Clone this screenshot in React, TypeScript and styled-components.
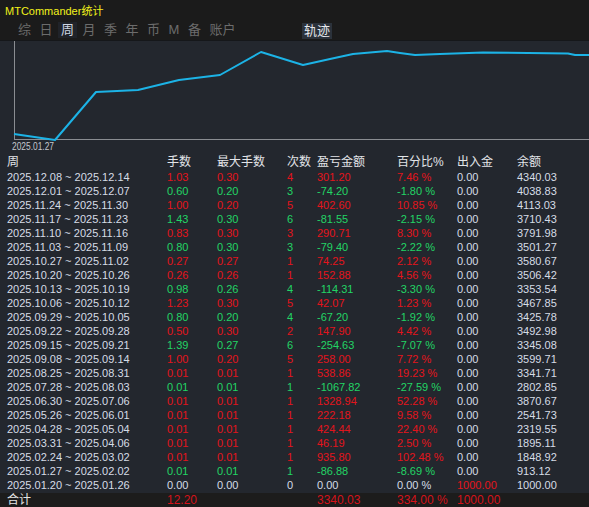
import React from "react"
import styled, { createGlobalStyle } from "styled-components"

type Tone = "up" | "down" | "flat"

const GlobalStyle = createGlobalStyle`
    html, body {
        margin: 0;
        padding: 0;
        background: #1b1b1b;
    }
    body {
        font-family: "Liberation Sans", "Noto Sans CJK SC", sans-serif;
        font-size: 11px;
    }
`

const rows: [string, string, string, string, string, string, string, string, Tone][] = [
    ["2025.12.08 ~ 2025.12.14", "1.03", "0.30", "4", "301.20", "7.46 %", "0.00", "4340.03", "up"],
    ["2025.12.01 ~ 2025.12.07", "0.60", "0.20", "3", "-74.20", "-1.80 %", "0.00", "4038.83", "down"],
    ["2025.11.24 ~ 2025.11.30", "1.00", "0.20", "5", "402.60", "10.85 %", "0.00", "4113.03", "up"],
    ["2025.11.17 ~ 2025.11.23", "1.43", "0.30", "6", "-81.55", "-2.15 %", "0.00", "3710.43", "down"],
    ["2025.11.10 ~ 2025.11.16", "0.83", "0.30", "3", "290.71", "8.30 %", "0.00", "3791.98", "up"],
    ["2025.11.03 ~ 2025.11.09", "0.80", "0.30", "3", "-79.40", "-2.22 %", "0.00", "3501.27", "down"],
    ["2025.10.27 ~ 2025.11.02", "0.27", "0.27", "1", "74.25", "2.12 %", "0.00", "3580.67", "up"],
    ["2025.10.20 ~ 2025.10.26", "0.26", "0.26", "1", "152.88", "4.56 %", "0.00", "3506.42", "up"],
    ["2025.10.13 ~ 2025.10.19", "0.98", "0.26", "4", "-114.31", "-3.30 %", "0.00", "3353.54", "down"],
    ["2025.10.06 ~ 2025.10.12", "1.23", "0.30", "5", "42.07", "1.23 %", "0.00", "3467.85", "up"],
    ["2025.09.29 ~ 2025.10.05", "0.80", "0.20", "4", "-67.20", "-1.92 %", "0.00", "3425.78", "down"],
    ["2025.09.22 ~ 2025.09.28", "0.50", "0.30", "2", "147.90", "4.42 %", "0.00", "3492.98", "up"],
    ["2025.09.15 ~ 2025.09.21", "1.39", "0.27", "6", "-254.63", "-7.07 %", "0.00", "3345.08", "down"],
    ["2025.09.08 ~ 2025.09.14", "1.00", "0.20", "5", "258.00", "7.72 %", "0.00", "3599.71", "up"],
    ["2025.08.25 ~ 2025.08.31", "0.01", "0.01", "1", "538.86", "19.23 %", "0.00", "3341.71", "up"],
    ["2025.07.28 ~ 2025.08.03", "0.01", "0.01", "1", "-1067.82", "-27.59 %", "0.00", "2802.85", "down"],
    ["2025.06.30 ~ 2025.07.06", "0.01", "0.01", "1", "1328.94", "52.28 %", "0.00", "3870.67", "up"],
    ["2025.05.26 ~ 2025.06.01", "0.01", "0.01", "1", "222.18", "9.58 %", "0.00", "2541.73", "up"],
    ["2025.04.28 ~ 2025.05.04", "0.01", "0.01", "1", "424.44", "22.40 %", "0.00", "2319.55", "up"],
    ["2025.03.31 ~ 2025.04.06", "0.01", "0.01", "1", "46.19", "2.50 %", "0.00", "1895.11", "up"],
    ["2025.02.24 ~ 2025.03.02", "0.01", "0.01", "1", "935.80", "102.48 %", "0.00", "1848.92", "up"],
    ["2025.01.27 ~ 2025.02.02", "0.01", "0.01", "1", "-86.88", "-8.69 %", "0.00", "913.12", "down"],
    ["2025.01.20 ~ 2025.01.26", "0.00", "0.00", "0", "0.00", "0.00 %", "1000.00", "1000.00", "flat"],
]

const tabs = ["综", "日", "周", "月", "季", "年", "币", "M", "备", "账户"]

const curve: [number, number][] = [
    [14, 134], [55, 140], [96, 92], [138, 90], [179, 80], [220, 75], [261, 52],
    [303, 65], [330, 59], [353, 54], [387, 51], [400, 53], [415, 55], [440, 54],
    [483, 52.5], [568, 53.5], [575, 55], [589, 55],
]

const toneColor = (t: Tone) => (t === "up" ? "#e3141c" : t === "down" ? "#22d465" : "#d6dce6")

const App = () => {
    return (
        <Window>
            <GlobalStyle />
            <TitleBar>MTCommander统计</TitleBar>
            <TabBar>
                <TabGroup>
                    {tabs.map((t) => (
                        <Tab key={t} $active={t === "周"}>
                            {t}
                        </Tab>
                    ))}
                </TabGroup>
                <TrackTab>轨迹</TrackTab>
            </TabBar>
            <Chart>
                <svg width="589" height="116" viewBox="0 40 589 116">
                    <line x1="14.5" y1="40" x2="14.5" y2="139.5" stroke="#8a8d92" strokeWidth="1" />
                    <line x1="14" y1="139.5" x2="589" y2="139.5" stroke="#8a8d92" strokeWidth="1" />
                    <polyline
                        points={curve.map((p) => p.join(",")).join(" ")}
                        fill="none"
                        stroke="#1cb3e6"
                        strokeWidth="2"
                        strokeLinejoin="round"
                    />
                    <text x="12" y="150" fill="#c4c8ce" fontSize="10" fontFamily="Liberation Sans, sans-serif" textLength="42" lengthAdjust="spacingAndGlyphs">
                        2025.01.27
                    </text>
                </svg>
            </Chart>
            <Table>
                <HeadRow>
                    <span>周</span>
                    <span>手数</span>
                    <span>最大手数</span>
                    <span>次数</span>
                    <span>盈亏金额</span>
                    <span>百分比%</span>
                    <span>出入金</span>
                    <span>余额</span>
                </HeadRow>
                {rows.map((r) => (
                    <Row key={r[0]}>
                        <Cell>{r[0]}</Cell>
                        <Cell $color={toneColor(r[8])}>{r[1]}</Cell>
                        <Cell $color={toneColor(r[8])}>{r[2]}</Cell>
                        <Cell $color={toneColor(r[8])}>{r[3]}</Cell>
                        <Cell $color={toneColor(r[8])}>{r[4]}</Cell>
                        <Cell $color={toneColor(r[8])}>{r[5]}</Cell>
                        <Cell $color={r[6] === "0.00" ? undefined : "#e3141c"}>{r[6]}</Cell>
                        <Cell>{r[7]}</Cell>
                    </Row>
                ))}
                <TotalRow>
                    <Cell $color="#e4e4e4">合计</Cell>
                    <Cell $color="#d4121a">12.20</Cell>
                    <Cell />
                    <Cell />
                    <Cell $color="#d4121a">3340.03</Cell>
                    <Cell $color="#d4121a">334.00 %</Cell>
                    <Cell $color="#d4121a">1000.00</Cell>
                    <Cell />
                </TotalRow>
            </Table>
        </Window>
    )
}

const Window = styled.div`
    width: 589px;
    height: 507px;
    overflow: hidden;
    background: #1b1b1b;
    display: flex;
    flex-flow: column;
`

const TitleBar = styled.div`
    height: 20px;
    line-height: 22px;
    padding-left: 5px;
    color: #f2f21a;
    font-size: 11px;
`

const TabBar = styled.div`
    height: 20px;
    display: flex;
    align-items: center;
`

const TabGroup = styled.div`
    display: flex;
    align-items: center;
    padding-left: 15px;
    width: 287px;
`

const Tab = styled.span<{ $active?: boolean }>`
    font-size: 13px;
    line-height: 16px;
    padding: 0 3px;
    margin-right: 2.5px;
    color: ${(p) => (p.$active ? "#cfd6e2" : "#6c6c6c")};
    background: ${(p) => (p.$active ? "#202329" : "transparent")};
`

const TrackTab = styled.span`
    font-size: 13px;
    line-height: 16px;
    padding: 0 2px;
    margin-top: 2px;
    color: #e6e8ec;
    background: #2b323b;
`

const Chart = styled.div`
    height: 116px;
    background: #23272e;
    border-top: 1px solid #15171a;
    box-sizing: border-box;
    overflow: hidden;

    svg {
        display: block;
        margin-top: -1px;
    }
`

const Table = styled.div`
    flex-grow: 1;
    background: #23272e;
    display: flex;
    flex-flow: column;
`

const HeadRow = styled.div`
    display: grid;
    grid-template-columns: 160px 50px 70px 30px 80px 60px 60px 1fr;
    padding-left: 7px;
    height: 15px;
    line-height: 15px;
    font-size: 12px;
    color: #e2e4e8;
`

const Row = styled.div`
    display: grid;
    grid-template-columns: 160px 50px 70px 30px 80px 60px 60px 1fr;
    padding-left: 7px;
    height: 14px;
    line-height: 14px;
`

const TotalRow = styled(Row)`
    background: #1c1c1c;
    font-size: 12px;
    margin-top: 1px;
    flex-grow: 1;
`

const Cell = styled.span<{ $color?: string }>`
    color: ${(p) => p.$color || "#d6dce6"};
    white-space: nowrap;
`

export default App
